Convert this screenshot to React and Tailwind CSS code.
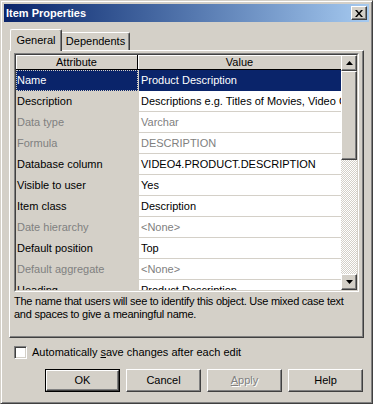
import React from 'react';

const rows = [
  { a: 'Name', v: 'Product Description', sel: true },
  { a: 'Description', v: 'Descriptions e.g. Titles of Movies, Video Games and Music' },
  { a: 'Data type', v: 'Varchar', dim: true },
  { a: 'Formula', v: 'DESCRIPTION', dim: true },
  { a: 'Database column', v: 'VIDEO4.PRODUCT.DESCRIPTION' },
  { a: 'Visible to user', v: 'Yes' },
  { a: 'Item class', v: 'Description' },
  { a: 'Date hierarchy', v: '<None>', dim: true },
  { a: 'Default position', v: 'Top' },
  { a: 'Default aggregate', v: '<None>', dim: true },
  { a: 'Heading', v: 'Product Description' },
];

const raised =
  'border border-t-white border-l-white border-r-[#404040] border-b-[#404040] shadow-[inset_-1px_-1px_0_#808080] bg-[#d4d0c8]';

const Arrow = ({ down }) => (
  <svg width="7" height="4" viewBox="0 0 7 4">
    {down ? <path d="M0 0h7L3.5 4z" fill="#000" /> : <path d="M0 4h7L3.5 0z" fill="#000" />}
  </svg>
);

const Button = ({ children, def, disabled }) => (
  <div className={def ? 'border border-black' : ''}>
    <div
      className={`${raised} flex items-center justify-center ${def ? 'w-[73px] h-[21px]' : 'w-[75px] h-[23px]'} ${
        disabled ? 'text-[#808080] [text-shadow:1px_1px_0_#fff]' : 'text-black'
      }`}
    >
      {children}
    </div>
  </div>
);

export default function App() {
  return (
    <div className="w-[373px] h-[404px] bg-[#d4d0c8] border border-t-[#d4d0c8] border-l-[#d4d0c8] border-r-[#404040] border-b-[#404040] shadow-[inset_1px_1px_0_#fff,inset_-1px_-1px_0_#808080] p-[3px] flex flex-col font-['Liberation_Sans',sans-serif] text-[11px] leading-[13px] select-none">
      {/* title bar */}
      <div className="h-[18px] flex items-center justify-between pl-[2px] pr-[2px] bg-gradient-to-r from-[#0a246a] to-[#a6caf0]">
        <span className="text-white font-bold text-[11px]">Item Properties</span>
        <div className={`${raised} w-[16px] h-[14px] flex items-center justify-center`}>
          <svg width="8" height="7" viewBox="0 0 8 7">
            <path d="M0 0h2l2 2.5L6 0h2L5 3.5 8 7H6L4 4.5 2 7H0l3-3.5z" fill="#000" />
          </svg>
        </div>
      </div>

      {/* tabs */}
      <div className="mt-[7px] ml-[6px] flex items-end h-[21px] relative z-10">
        <div className="h-[22px] w-[52px] -mb-[1px] border-t border-l border-r border-t-white border-l-white border-r-[#404040] shadow-[inset_-1px_0_0_#808080] rounded-t-[2px] bg-[#d4d0c8] flex items-start justify-center pt-[4px]">
          General
        </div>
        <div className="h-[18px] w-[68px] border-t border-r border-t-white border-r-[#404040] shadow-[inset_-1px_0_0_#808080] rounded-tr-[2px] flex items-start justify-center pt-[2px]">
          Dependents
        </div>
      </div>

      {/* panel */}
      <div className="ml-[5px] w-[355px] h-[288px] border border-t-white border-l-white border-r-[#404040] border-b-[#404040] shadow-[inset_-1px_-1px_0_#808080] px-[4px] pt-[2px] flex flex-col">
        <div className="h-[239px] border border-t-[#808080] border-l-[#808080] border-r-white border-b-white">
          <div className="h-full border border-t-[#404040] border-l-[#404040] border-r-[#d4d0c8] border-b-[#d4d0c8] flex">
            <div className="flex-1 flex flex-col overflow-hidden">
              <div className="h-[15px] flex shrink-0">
                <div className="w-[122px] border-r border-b border-black shadow-[inset_1px_1px_0_#fff] flex items-center justify-center">
                  Attribute
                </div>
                <div className="flex-1 border-b border-black shadow-[inset_1px_1px_0_#fff] flex items-center justify-center">
                  Value
                </div>
              </div>
              {rows.map((r) => (
                <div key={r.a} className="h-[21px] flex shrink-0">
                  <div
                    className={`w-[122px] pl-[1px] flex items-center ${
                      r.sel
                        ? 'bg-[#0a246a] text-white outline-1 outline-dotted outline-[#d4d0c8] -outline-offset-1'
                        : r.dim
                        ? 'text-[#808080]'
                        : 'text-black'
                    }`}
                  >
                    {r.a}
                  </div>
                  <div className="w-[1px]" />
                  <div
                    className={`flex-1 pl-[2px] flex items-center whitespace-nowrap overflow-hidden border-b ${
                      r.sel ? 'bg-[#0a246a] text-white border-[#0a246a]' : 'bg-white border-[#d4d0c8]'
                    } ${r.dim ? 'text-[#808080]' : ''}`}
                  >
                    {r.v}
                  </div>
                </div>
              ))}
            </div>
            {/* scrollbar */}
            <div className="w-[16px] flex flex-col bg-[repeating-conic-gradient(#d4d0c8_0_25%,#ffffff_0_50%)] bg-[length:2px_2px]">
              <div className={`${raised} h-[16px] flex items-center justify-center`}>
                <Arrow />
              </div>
              <div className={`${raised} h-[89px]`} />
              <div className="flex-1" />
              <div className={`${raised} h-[16px] flex items-center justify-center`}>
                <Arrow down />
              </div>
            </div>
          </div>
        </div>
        <p className="mt-[3px] text-black tracking-[-0.25px]">
          The name that users will see to identify this object. Use mixed case text and spaces to give a meaningful name.
        </p>
      </div>

      {/* checkbox */}
      <div className="mt-[8px] ml-[10px] flex items-center gap-[5px]">
        <div className="w-[13px] h-[13px] bg-white border border-t-[#808080] border-l-[#808080] border-r-white border-b-white shadow-[inset_1px_1px_0_#404040,inset_-1px_-1px_0_#d4d0c8]" />
        <span>
          Automatically <span className="underline">s</span>ave changes after each edit
        </span>
      </div>

      {/* buttons */}
      <div className="mt-[10px] ml-[41px] flex gap-[6px]">
        <Button def>OK</Button>
        <Button>Cancel</Button>
        <Button disabled>
          <span className="underline">A</span>pply
        </Button>
        <Button>Help</Button>
      </div>
    </div>
  );
}
